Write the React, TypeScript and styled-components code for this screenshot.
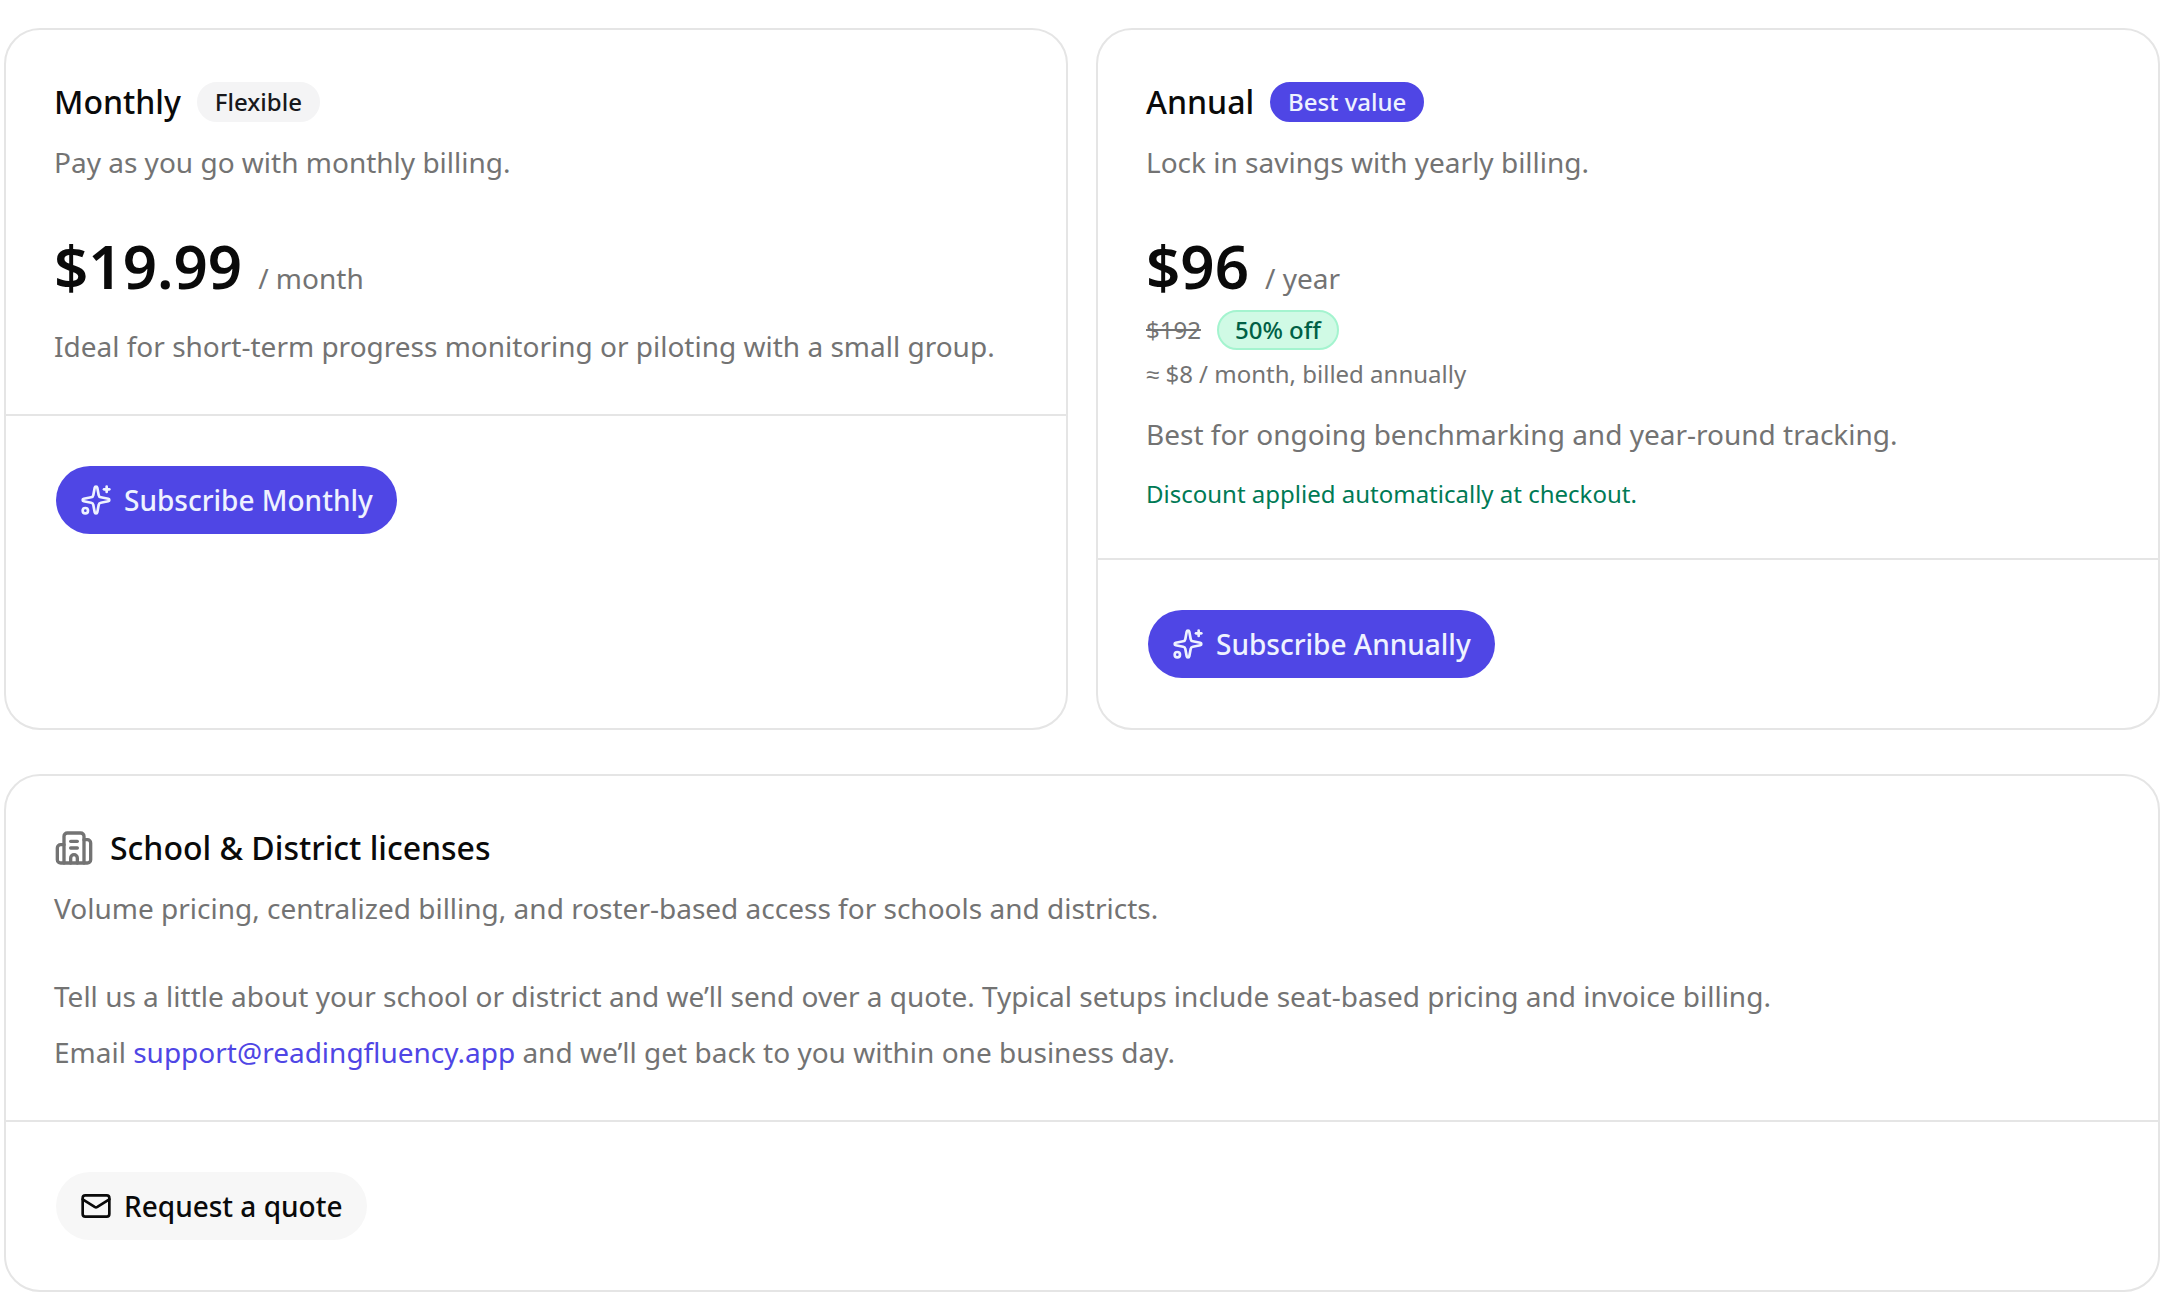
import React from "react";
import styled, { createGlobalStyle, css } from "styled-components";
import { Building2, Mail, Sparkles } from "lucide-react";

const color = {
  text: "#0a0a0a",
  muted: "#737373",
  line: "#e5e5e5",
  primary: "#4f46e5",
  onPrimary: "#eef2ff",
  secondary: "#f4f4f5",
  success: "#007a55",
};

const GlobalStyle = createGlobalStyle`
  *, *::before, *::after { box-sizing: border-box; }
  body {
    margin: 0;
    background: #ffffff;
    color: ${color.text};
    font-family: "Noto Sans", sans-serif;
    font-size: 28px;
    line-height: 40px;
  }
  h2, p { margin: 0; }
`;

const Page = styled.main`
  display: flex;
  flex-direction: column;
  gap: 44px;
  padding: 28px 12px 16px 4px;
`;

const Plans = styled.div`
  display: grid;
  grid-template-columns: repeat(2, minmax(0, 1fr));
  gap: 28px;

  @media (max-width: 1100px) {
    grid-template-columns: minmax(0, 1fr);
  }
`;

const Card = styled.section`
  display: flex;
  flex-direction: column;
  border: 2px solid ${color.line};
  border-radius: 36px;
  background: #ffffff;
`;

const CardBody = styled.div`
  display: flex;
  flex-direction: column;
  gap: 48px;
  padding: 48px;
`;

const CardHeader = styled.header`
  display: flex;
  flex-direction: column;
  gap: 16px;
`;

const TitleRow = styled.div`
  display: flex;
  align-items: center;
  gap: 16px;

  svg {
    flex: none;
    color: ${color.muted};
  }
`;

const Title = styled.h2`
  font-size: 32px;
  line-height: 48px;
  font-weight: 500;
`;

const Text = styled.p`
  color: ${color.muted};
`;

const SmallText = styled.p<{ $success?: boolean }>`
  font-size: 24px;
  line-height: 32px;
  color: ${(p) => (p.$success ? color.success : color.muted)};
`;

const Stack = styled.div<{ $gap: number }>`
  display: flex;
  flex-direction: column;
  gap: ${(p) => p.$gap}px;
`;

const PriceRow = styled.div`
  display: flex;
  align-items: baseline;
  gap: 16px;
`;

const Price = styled.span`
  font-size: 60px;
  line-height: 72px;
  font-weight: 600;
`;

const Period = styled.span`
  color: ${color.muted};
`;

const DiscountRow = styled.div`
  display: flex;
  align-items: center;
  gap: 16px;
`;

const OldPrice = styled.s`
  font-size: 24px;
  line-height: 32px;
  color: ${color.muted};
`;

const badgeTone = {
  neutral: css`
    background: ${color.secondary};
    border-color: ${color.secondary};
    color: #18181b;
  `,
  primary: css`
    background: ${color.primary};
    border-color: ${color.primary};
    color: ${color.onPrimary};
  `,
  success: css`
    background: #d0fae5;
    border-color: #a4f4cf;
    color: #006045;
  `,
};

const Badge = styled.span<{ $tone: keyof typeof badgeTone }>`
  display: inline-flex;
  align-items: center;
  height: 40px;
  padding: 0 16px;
  border: 2px solid;
  border-radius: 20px;
  font-size: 24px;
  line-height: 32px;
  font-weight: 500;
  white-space: nowrap;
  ${(p) => badgeTone[p.$tone]}
`;

const CardFooter = styled.footer`
  display: flex;
  padding: 48px;
  border-top: 2px solid ${color.line};
`;

const Button = styled.button<{ $primary?: boolean }>`
  display: inline-flex;
  align-items: center;
  gap: 12px;
  height: 72px;
  padding: 0 24px;
  border: 2px solid transparent;
  border-radius: 36px;
  background: ${(p) => (p.$primary ? color.primary : "#f7f7f7")};
  background-clip: padding-box;
  color: ${(p) => (p.$primary ? color.onPrimary : color.text)};
  font: inherit;
  font-weight: 500;
  white-space: nowrap;
  cursor: pointer;
`;

const EmailLink = styled.a`
  color: ${color.primary};
  text-decoration: none;

  &:hover {
    text-decoration: underline;
  }
`;

export default function App() {
  return (
    <>
      <GlobalStyle />
      <Page>
        <Plans>
          <Card>
            <CardBody>
              <CardHeader>
                <TitleRow>
                  <Title>Monthly</Title>
                  <Badge $tone="neutral">Flexible</Badge>
                </TitleRow>
                <Text>Pay as you go with monthly billing.</Text>
              </CardHeader>
              <Stack $gap={24}>
                <PriceRow>
                  <Price>$19.99</Price>
                  <Period>/ month</Period>
                </PriceRow>
                <Text>Ideal for short-term progress monitoring or piloting with a small group.</Text>
              </Stack>
            </CardBody>
            <CardFooter>
              <Button $primary type="button">
                <Sparkles size={32} aria-hidden />
                Subscribe Monthly
              </Button>
            </CardFooter>
          </Card>

          <Card>
            <CardBody>
              <CardHeader>
                <TitleRow>
                  <Title>Annual</Title>
                  <Badge $tone="primary">Best value</Badge>
                </TitleRow>
                <Text>Lock in savings with yearly billing.</Text>
              </CardHeader>
              <Stack $gap={24}>
                <Stack $gap={8}>
                  <PriceRow>
                    <Price>$96</Price>
                    <Period>/ year</Period>
                  </PriceRow>
                  <DiscountRow>
                    <OldPrice>$192</OldPrice>
                    <Badge $tone="success">50% off</Badge>
                  </DiscountRow>
                  <SmallText>≈ $8 / month, billed annually</SmallText>
                </Stack>
                <Text>Best for ongoing benchmarking and year-round tracking.</Text>
                <SmallText $success>Discount applied automatically at checkout.</SmallText>
              </Stack>
            </CardBody>
            <CardFooter>
              <Button $primary type="button">
                <Sparkles size={32} aria-hidden />
                Subscribe Annually
              </Button>
            </CardFooter>
          </Card>
        </Plans>

        <Card>
          <CardBody>
            <CardHeader>
              <TitleRow>
                <Building2 size={40} aria-hidden />
                <Title>School &amp; District licenses</Title>
              </TitleRow>
              <Text>Volume pricing, centralized billing, and roster-based access for schools and districts.</Text>
            </CardHeader>
            <Stack $gap={16}>
              <Text>
                Tell us a little about your school or district and we’ll send over a quote. Typical setups include
                seat-based pricing and invoice billing.
              </Text>
              <Text>
                Email <EmailLink href="mailto:support@readingfluency.app">support@readingfluency.app</EmailLink> and
                we’ll get back to you within one business day.
              </Text>
            </Stack>
          </CardBody>
          <CardFooter>
            <Button type="button">
              <Mail size={32} aria-hidden />
              Request a quote
            </Button>
          </CardFooter>
        </Card>
      </Page>
    </>
  );
}
